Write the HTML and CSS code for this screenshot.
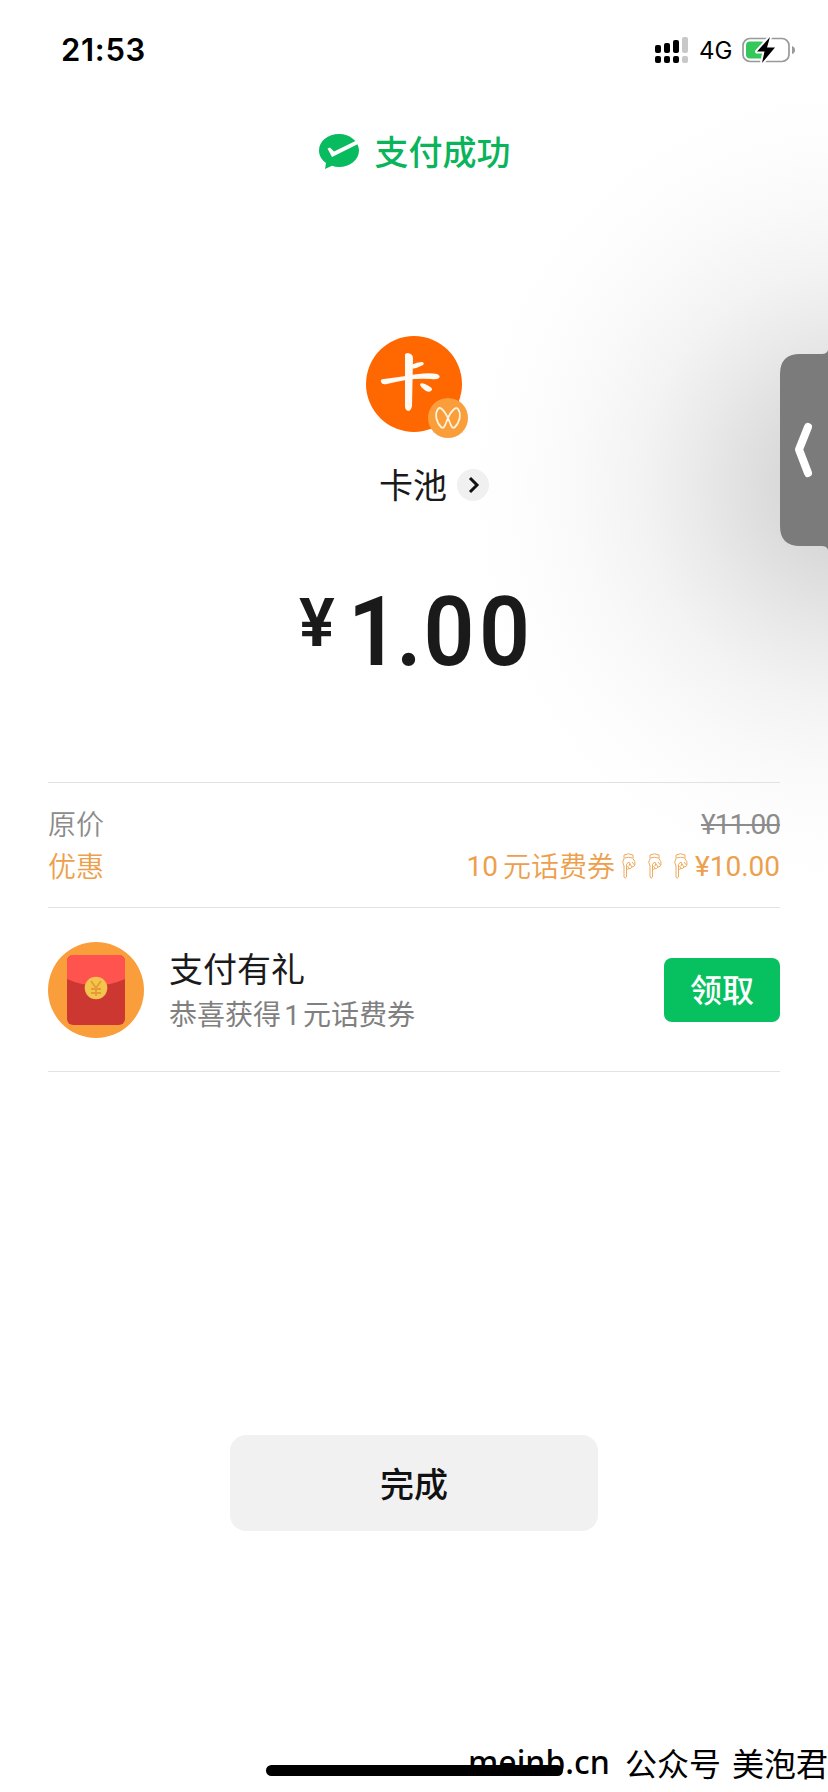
FILE: index.html
```html
<!DOCTYPE html>
<html lang="zh-CN">
<head>
<meta charset="utf-8">
<title>支付成功</title>
<link rel="stylesheet" href="styles.css">
</head>
<body>
<main class="screen">
  <div class="shade"></div>
  <header class="status">
    <span class="clock">21:53</span>
    <div class="indicators">
      <svg class="signal" width="34" height="27" viewBox="0 0 34 27"><g fill="#000"><rect x="0" y="8" width="6" height="8" rx="2"/><rect x="9" y="6" width="6" height="10" rx="2"/><rect x="18" y="3" width="6" height="13" rx="2"/><rect x="0" y="19" width="6" height="7" rx="2"/><rect x="9" y="19" width="6" height="7" rx="2"/><rect x="18" y="19" width="6" height="7" rx="2"/></g><g fill="#c8c8c8"><rect x="27" y="0" width="6" height="16" rx="2"/><rect x="27" y="19" width="6" height="7" rx="2"/></g></svg>
      <span class="network">4G</span>
      <svg class="battery" width="54" height="28" viewBox="0 0 54 28"><rect x="1" y="2.500" width="46" height="23" rx="7" fill="#fff" stroke="#999" stroke-width="1.700"/><rect x="4" y="5.500" width="19" height="17" rx="4" fill="#34c759"/><path d="M50 10q3 1 3 4t-3 4z" fill="#999"/><path d="M28 1 15 15.500h7.500L20 27l13-15.500h-8z" fill="#000" stroke="#fff" stroke-width="4" paint-order="stroke" stroke-linejoin="round"/></svg>
    </div>
  </header>

  <div class="success">
    <svg width="42" height="38" viewBox="0 0 42 38"><path d="M21 1C10 1 1 8 1 17.500c0 5 2.700 9.500 7 12.500l-1 6 7-3.200c2.200.8 4.600 1.200 7 1.200 11 0 20-7.500 20-16.500S32 1 21 1z" fill="#09bb5f"/><path d="M9.500 15.500 14 24l27-13.500-2.500-3L16 18.500l-4-4z" fill="#fff"/></svg>
    <span>支付成功</span>
  </div>

  <section class="merchant">
    <div class="avatar">
      <svg width="104" height="104" viewBox="0 0 104 104" role="img" aria-label="卡"><circle cx="48" cy="48" r="48" fill="#ff6700"/><g fill="#fffaf4"><path d="M39 19q0-2 3-2 5 1 5 5l-1 48q-1 5-4 5-3-1-3-5z"/><path d="M45 29q6-3 11-3 3 1 1 3-5 3-12 4z"/><path d="M15 46q-1-3 3-3l22-3q20-4 31-2 4 2 2 4-2 2-8 1-12-1-25 1-11 2-19 4-5 1-6-2z"/><path d="M54 48q2-2 7 1 6 3 5 5-2 3-6 1-6-4-6-7z"/></g><circle cx="82" cy="82" r="20" fill="#fa9d3b"/><path d="M82 82C78 74 74 70 72 73c-4 6-1 14 3 18 3 3 4-2 7-9 3-7 8-12 10-9 4 6 1 14-3 18-3 3-4-2-7-9z" fill="none" stroke="#fff5df" stroke-width="1.800"/></svg>
    </div>
    <div class="name"><span>卡池</span><svg width="32" height="32" viewBox="0 0 32 32"><circle cx="16" cy="16" r="16" fill="#f0f0f0"/><path d="m13 9 7 7-7 7" fill="none" stroke="#111" stroke-width="3"/></svg></div>
    <div class="amount"><span class="yen">¥</span><span class="value"><span class="unit">1</span><span class="point">.</span>00</span></div>
  </section>

  <section class="details">
    <div class="row original"><span class="cjk">原价</span><del>¥11.00</del></div>
    <div class="row discount"><span class="cjk">优惠</span>
      <div class="coupon"><span class="ten">10</span><span class="cjk">元话费券</span>
        <div class="hands">
          <svg class="hand" viewBox="0 0 14 26"><path d="M2 2q4.500-2.500 9 0v3.500q2.500 3 2 6-.5 2.500-3 2.500-1 2-3 1.500-1.200 1.200-2.500.5V24q-1.500 2.500-2.500 0V13Q-.5 9 2 5.500zM2.500 5q4-1.500 8 0M4.500 16v-4.500Q6 8 8 10l-1 3m0 2.500L5.500 13M10 14 8 11m4.500 1L10 9"/></svg>
          <svg class="hand" viewBox="0 0 14 26"><path d="M2 2q4.500-2.500 9 0v3.500q2.500 3 2 6-.5 2.500-3 2.500-1 2-3 1.500-1.200 1.200-2.500.5V24q-1.500 2.500-2.500 0V13Q-.5 9 2 5.500zM2.500 5q4-1.500 8 0M4.500 16v-4.500Q6 8 8 10l-1 3m0 2.500L5.500 13M10 14 8 11m4.500 1L10 9"/></svg>
          <svg class="hand" viewBox="0 0 14 26"><path d="M2 2q4.500-2.500 9 0v3.500q2.500 3 2 6-.5 2.500-3 2.500-1 2-3 1.500-1.200 1.200-2.500.5V24q-1.500 2.500-2.500 0V13Q-.5 9 2 5.500zM2.500 5q4-1.500 8 0M4.500 16v-4.500Q6 8 8 10l-1 3m0 2.500L5.500 13M10 14 8 11m4.500 1L10 9"/></svg>
        </div>
        <span class="saving">¥10.00</span></div>
    </div>
  </section>

  <section class="gift">
    <svg width="96" height="96" viewBox="0 0 96 96"><defs><clipPath id="envelope"><rect x="19" y="13" width="58" height="70" rx="6"/></clipPath></defs><circle cx="48" cy="48" r="48" fill="#fa9d3b"/><g clip-path="url(#envelope)"><path fill="#cc3831" d="M19 13h58v70H19z"/><path d="M19 13h58v24q-29 13-58 0z" fill="#ff5350"/></g><circle cx="48" cy="46" r="11.300" fill="#f4c44f"/><path d="m43 39 5 7 5-7m-5 7v8m-5-7h10m-10 4h10" fill="none" stroke="#e59b35" stroke-width="1.800"/></svg>
    <div class="gift-copy"><span class="gift-title">支付有礼</span><span class="gift-note">恭喜获得<span class="num">1</span>元话费券</span></div>
    <button class="claim">领取</button>
  </section>

  <button class="done">完成</button>

  <div class="drawer"><svg width="48" height="200" viewBox="0 0 48 200"><path d="M48 0q-1 4-6 4H20Q0 4 0 24v152q0 20 20 20h22q5 0 6 4z" fill="#7b7b7b"/><path d="m28 77-9 22.500L28 123" fill="none" stroke="#fff" stroke-width="8" stroke-linecap="round" stroke-linejoin="round"/></svg></div>
  <div class="credit"><span class="site">meinb.cn</span><span class="account">公众号</span><span class="account">美泡君</span></div>
  <div class="home-bar"></div>
</main>
</body>
</html>
```
FILE: styles.css
```css
* { box-sizing: border-box; }
body { margin: 0; background: #fff; }
button { border: 0; padding: 0; font: inherit; }
svg { display: block; flex: none; }
.screen {
  position: relative; isolation: isolate;
  display: flex; flex-direction: column;
  width: 828px; height: 1792px; overflow: hidden;
  background: #fff; color: #1a1a1a;
  font-family: "Noto Sans CJK SC", sans-serif;
}
.shade {
  position: absolute; z-index: -1; inset: 0;
  background: radial-gradient(ellipse 390px 410px at 848px 485px, #cfcfcf 0%, #d7d7d7 14%, #e0e0e0 26%, #eaeaea 39%, #f3f3f3 53%, #f9f9f9 69%, #fdfdfd 84%, #fff 100%);
}
.status { display: flex; justify-content: space-between; height: 100px; padding: 0 32px 0 61px; align-items: center; }
.clock { color: #000; font: 600 31px/40px Inter, sans-serif; letter-spacing: .7px; }
.indicators { display: flex; align-items: center; color: #000; }
.network { width: 34px; margin: 1px 9px 0 10px; font: 400 24px/30px Inter, sans-serif; }
.success { display: flex; align-items: center; justify-content: center; gap: 15px; height: 48px; margin-top: 28px; color: #09b45a; font-size: 34px; font-weight: 500; line-height: 48px; }
.success span { margin-top: -3px; }
.merchant { display: flex; flex-direction: column; align-items: center; height: 606px; padding-top: 160px; }
.avatar { width: 96px; height: 96px; }
.avatar svg { overflow: visible; }
.name { display: flex; align-items: center; gap: 10px; margin: 29px 0 0 40px; height: 48px; font-size: 34px; line-height: 48px; }
.name span { margin-top: -3px; }
.amount { display: flex; align-items: flex-start; align-self: flex-start; height: 100px; margin: 73px 0 0 299px; font: 600 96px/100px Roboto, sans-serif; }
.yen { width: 49px; font-size: 67px; line-height: 83px; }
.value { letter-spacing: 5px; transform: scaleX(.93); transform-origin: left; }
.unit { letter-spacing: -3px; }
.point { letter-spacing: 2px; }
.details { display: flex; flex-direction: column; gap: 2px; height: 126px; margin: 0 48px; padding-top: 21px; border-top: 1px solid #e2e2e2; border-bottom: 1px solid #e2e2e2; font-size: 28px; line-height: 40px; }
.row { display: flex; justify-content: space-between; height: 40px; }
.cjk { margin-top: -1px; font-weight: 350; }
.original { color: #8c8c8c; }
.discount, .coupon { color: #eda04c; }
del, .saving, .ten { padding-top: 1px; font-family: Roboto, sans-serif; font-size: 28px; }
del { letter-spacing: -1px; }
.ten { margin-right: 5px; }
.coupon { display: flex; align-items: center; }
.coupon .cjk { margin-top: -3px; }
.hands { display: flex; gap: 12px; margin: 0 7px 0 7px; }
.hand { width: 14px; height: 26px; fill: none; stroke: #eda04c; stroke-width: .9; }
.gift { display: flex; align-items: center; height: 164px; margin: 0 48px; padding-top: 1px; border-bottom: 1px solid #e2e2e2; }
.gift-copy { display: flex; flex-direction: column; margin-left: 25px; }
.gift-title { font-size: 34px; line-height: 48px; }
.gift-note { color: #808080; font-size: 28px; line-height: 42px; }
.num { display: inline-block; width: 22px; text-align: center; font-family: Roboto, sans-serif; }
.claim { width: 116px; height: 64px; margin-left: auto; padding-bottom: 4px; border-radius: 8px; background: #07c160; color: #fff; font-size: 32px; font-weight: 500; }
.done { align-self: center; width: 368px; height: 96px; margin-top: 363px; padding-bottom: 2px; border-radius: 16px; background: #f1f1f1; color: #111; font-size: 34px; font-weight: 500; }
.drawer { position: absolute; right: 0; top: 350px; }
.credit { position: absolute; left: 468px; bottom: 6px; display: flex; align-items: center; height: 48px; color: #000; white-space: nowrap; font-size: 32px; }
.site { font: 500 32px/48px "Noto Sans", sans-serif; width: 157px; }
.account { width: 107px; }
.home-bar { position: absolute; left: 266px; bottom: 16px; width: 297px; height: 11px; border-radius: 6px; background: #000; }
```
